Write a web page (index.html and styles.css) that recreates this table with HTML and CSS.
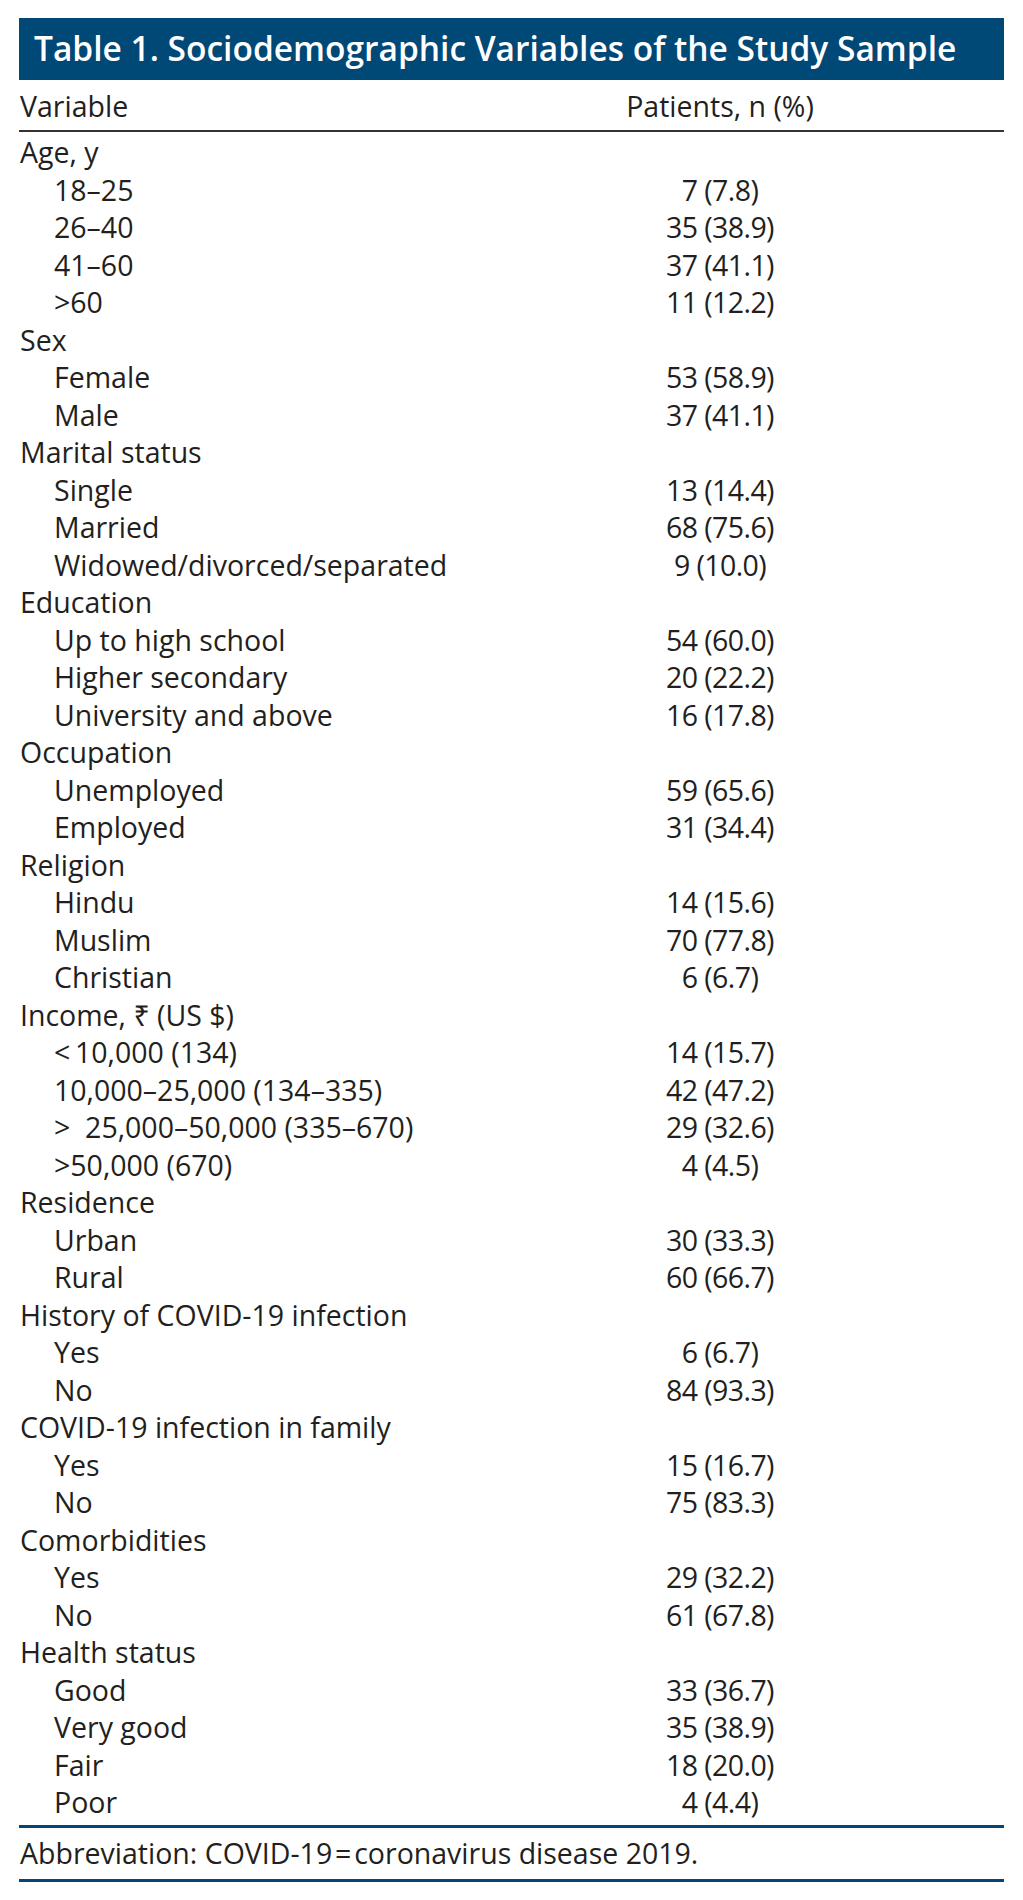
FILE: index.html
```html
<!DOCTYPE html>
<html lang="en">
<head>
<meta charset="utf-8">
<title>Table 1</title>
<link rel="stylesheet" href="styles.css">
</head>
<body>
<div class="table">
  <div class="title">Table 1. Sociodemographic Variables of the Study Sample</div>
  <div class="colhead">
    <div class="c1">Variable</div>
    <div class="c2">Patients, n (%)</div>
  </div>
  <div class="rows">
    <div class="row"><div class="c1">Age, y</div><div class="c2"></div></div>
    <div class="row"><div class="c1 sub">18–25</div><div class="c2">7 (7.8)</div></div>
    <div class="row"><div class="c1 sub">26–40</div><div class="c2">35 (38.9)</div></div>
    <div class="row"><div class="c1 sub">41–60</div><div class="c2">37 (41.1)</div></div>
    <div class="row"><div class="c1 sub">&gt;60</div><div class="c2">11 (12.2)</div></div>
    <div class="row"><div class="c1">Sex</div><div class="c2"></div></div>
    <div class="row"><div class="c1 sub">Female</div><div class="c2">53 (58.9)</div></div>
    <div class="row"><div class="c1 sub">Male</div><div class="c2">37 (41.1)</div></div>
    <div class="row"><div class="c1">Marital status</div><div class="c2"></div></div>
    <div class="row"><div class="c1 sub">Single</div><div class="c2">13 (14.4)</div></div>
    <div class="row"><div class="c1 sub">Married</div><div class="c2">68 (75.6)</div></div>
    <div class="row"><div class="c1 sub">Widowed/divorced/separated</div><div class="c2">9 (10.0)</div></div>
    <div class="row"><div class="c1">Education</div><div class="c2"></div></div>
    <div class="row"><div class="c1 sub">Up to high school</div><div class="c2">54 (60.0)</div></div>
    <div class="row"><div class="c1 sub">Higher secondary</div><div class="c2">20 (22.2)</div></div>
    <div class="row"><div class="c1 sub">University and above</div><div class="c2">16 (17.8)</div></div>
    <div class="row"><div class="c1">Occupation</div><div class="c2"></div></div>
    <div class="row"><div class="c1 sub">Unemployed</div><div class="c2">59 (65.6)</div></div>
    <div class="row"><div class="c1 sub">Employed</div><div class="c2">31 (34.4)</div></div>
    <div class="row"><div class="c1">Religion</div><div class="c2"></div></div>
    <div class="row"><div class="c1 sub">Hindu</div><div class="c2">14 (15.6)</div></div>
    <div class="row"><div class="c1 sub">Muslim</div><div class="c2">70 (77.8)</div></div>
    <div class="row"><div class="c1 sub">Christian</div><div class="c2">6 (6.7)</div></div>
    <div class="row"><div class="c1">Income, ₹ (US $)</div><div class="c2"></div></div>
    <div class="row"><div class="c1 sub">&lt;&#8201;10,000 (134)</div><div class="c2">14 (15.7)</div></div>
    <div class="row"><div class="c1 sub">10,000–25,000 (134–335)</div><div class="c2">42 (47.2)</div></div>
    <div class="row"><div class="c1 sub">&gt;&#160; 25,000–50,000 (335–670)</div><div class="c2">29 (32.6)</div></div>
    <div class="row"><div class="c1 sub">&gt;50,000 (670)</div><div class="c2">4 (4.5)</div></div>
    <div class="row"><div class="c1">Residence</div><div class="c2"></div></div>
    <div class="row"><div class="c1 sub">Urban</div><div class="c2">30 (33.3)</div></div>
    <div class="row"><div class="c1 sub">Rural</div><div class="c2">60 (66.7)</div></div>
    <div class="row"><div class="c1">History of COVID-19 infection</div><div class="c2"></div></div>
    <div class="row"><div class="c1 sub">Yes</div><div class="c2">6 (6.7)</div></div>
    <div class="row"><div class="c1 sub">No</div><div class="c2">84 (93.3)</div></div>
    <div class="row"><div class="c1">COVID-19 infection in family</div><div class="c2"></div></div>
    <div class="row"><div class="c1 sub">Yes</div><div class="c2">15 (16.7)</div></div>
    <div class="row"><div class="c1 sub">No</div><div class="c2">75 (83.3)</div></div>
    <div class="row"><div class="c1">Comorbidities</div><div class="c2"></div></div>
    <div class="row"><div class="c1 sub">Yes</div><div class="c2">29 (32.2)</div></div>
    <div class="row"><div class="c1 sub">No</div><div class="c2">61 (67.8)</div></div>
    <div class="row"><div class="c1">Health status</div><div class="c2"></div></div>
    <div class="row"><div class="c1 sub">Good</div><div class="c2">33 (36.7)</div></div>
    <div class="row"><div class="c1 sub">Very good</div><div class="c2">35 (38.9)</div></div>
    <div class="row"><div class="c1 sub">Fair</div><div class="c2">18 (20.0)</div></div>
    <div class="row"><div class="c1 sub">Poor</div><div class="c2">4 (4.4)</div></div>
  </div>
  <div class="foot">Abbreviation: COVID-19&#8202;=&#8202;coronavirus disease 2019.</div>
</div>
</body>
</html>
```

FILE: styles.css
```css
html, body {
  margin: 0;
  padding: 0;
  background: #ffffff;
}

body {
  font-family: "Open Sans", "Noto Sans", sans-serif;
  color: #231f20;
}

.table {
  width: 985px;
  margin: 18px 0 0 19px;
}

.title {
  background: #004876;
  color: #ffffff;
  font-weight: 600;
  font-size: 33.5px;
  height: 62px;
  line-height: 60px;
  padding-left: 15px;
  white-space: nowrap;
}

.colhead,
.row {
  display: grid;
  grid-template-columns: 417px 568px;
  font-size: 28.5px;
  white-space: nowrap;
}

.colhead {
  height: 50px;
  line-height: 53px;
  border-bottom: 2px solid #333333;
}

.rows {
  padding: 2px 0 3px;
  border-bottom: 3px solid #004876;
}

.row {
  height: 37.5px;
  line-height: 37.5px;
}

.row .c2 {
  letter-spacing: -0.6px;
}

.c1 {
  padding-left: 1px;
}

.c1.sub {
  padding-left: 35px;
}

.c2 {
  text-align: center;
}

.foot {
  font-size: 28.5px;
  height: 51px;
  line-height: 51px;
  padding-left: 1px;
  border-bottom: 3px solid #004876;
  white-space: nowrap;
}
```
